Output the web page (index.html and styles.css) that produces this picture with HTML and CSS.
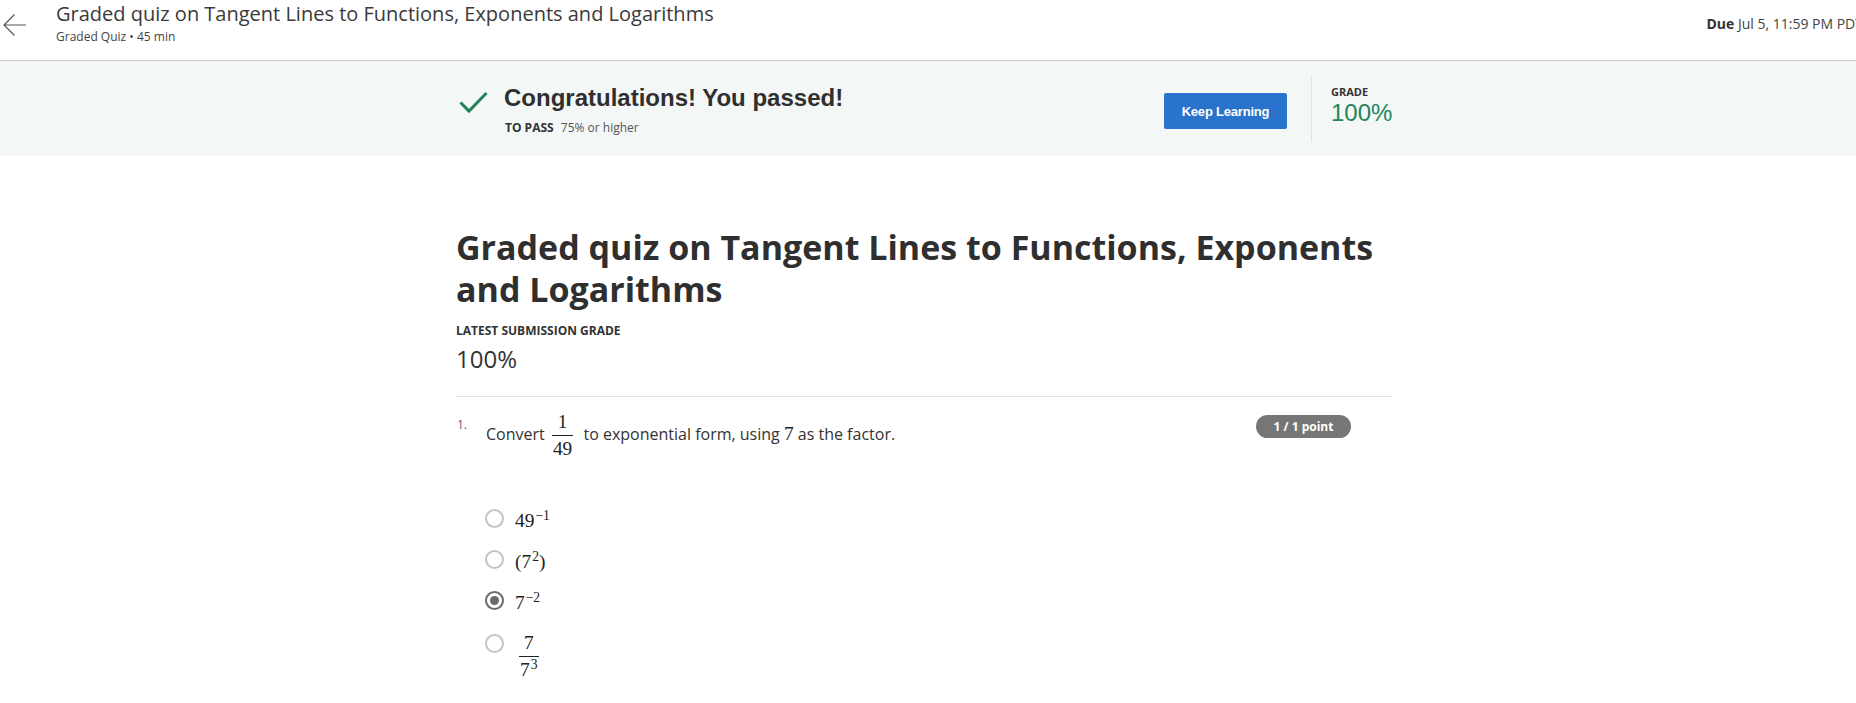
FILE: index.html
```html
<!DOCTYPE html>
<html lang="en">
<head>
<meta charset="utf-8">
<title>Graded quiz</title>
<link rel="stylesheet" href="styles.css">
</head>
<body>
<header class="topbar">
  <div class="back">
    <svg class="back-icon" width="24" height="24" viewBox="0 0 24 24" fill="none" stroke="#555" stroke-width="1.2">
      <path d="M23 12H1.5M11.5 1.5L1 12l10.5 10.5"/>
    </svg>
  </div>
  <div class="topbar-titles">
    <div class="topbar-title">Graded quiz on Tangent Lines to Functions, Exponents and Logarithms</div>
    <div class="topbar-sub">Graded Quiz • 45 min</div>
  </div>
  <div class="due"><b>Due</b> Jul 5, 11:59 PM PDT</div>
</header>

<section class="banner">
  <div class="banner-inner">
    <svg class="check" width="29" height="24" viewBox="0 0 29 24" fill="none" stroke="#1f8354" stroke-width="3">
      <path d="M1.5 12.5l8.5 8.5L27.5 3"/>
    </svg>
    <div class="pass-text">
      <div class="pass-title">Congratulations! You passed!</div>
      <div class="pass-sub"><b>TO PASS</b> 75% or higher</div>
    </div>
    <button class="keep">Keep Learning</button>
    <div class="divider"></div>
    <div class="grade">
      <div class="grade-label">GRADE</div>
      <div class="grade-value">100%</div>
    </div>
  </div>
</section>

<main class="content">
  <h1 class="quiz-title">Graded quiz on Tangent Lines to Functions, Exponents and Logarithms</h1>
  <div class="latest-label">LATEST SUBMISSION GRADE</div>
  <div class="latest-value">100%</div>
  <hr class="rule">

  <div class="question">
    <div class="qnum">1.</div>
    <div class="qbody">
      <div class="qtext">Convert <span class="frac q-frac"><span class="num">1</span><span class="den">49</span></span> to exponential form, using <span class="m">7</span> as the factor.</div>
      <ul class="options">
        <li class="option"><span class="radio"></span><span class="m opt-m">49<sup>−1</sup></span></li>
        <li class="option"><span class="radio"></span><span class="m opt-m">(7<sup>2</sup>)</span></li>
        <li class="option"><span class="radio checked"></span><span class="m opt-m">7<sup>−2</sup></span></li>
        <li class="option tall"><span class="radio"></span><span class="frac opt-frac"><span class="num">7</span><span class="den">7<sup>3</sup></span></span></li>
      </ul>
    </div>
    <div class="points">1 / 1 point</div>
  </div>
</main>
</body>
</html>
```

FILE: styles.css
```css
html, body {
  margin: 0;
  padding: 0;
  background: #fff;
  overflow: hidden;
}
body {
  font-family: "Open Sans", "Liberation Sans", sans-serif;
  color: #333;
  width: 1856px;
  height: 703px;
}

/* top bar */
.topbar {
  display: flex;
  align-items: flex-start;
  height: 60px;
  border-bottom: 1px solid #c5cbcb;
}
.back {
  width: 56px;
  flex: none;
}
.back-icon {
  display: block;
  margin: 13px 0 0 3px;
}
.topbar-titles {
  padding-top: 2px;
}
.topbar-title {
  font-size: 20px;
  line-height: 24px;
  color: #3a3a3a;
}
.topbar-sub {
  margin-top: 3px;
  font-size: 12px;
  line-height: 16px;
  color: #444;
}
.due {
  margin-left: auto;
  margin-right: -7px;
  margin-top: 14px;
  font-size: 14px;
  line-height: 20px;
  color: #444;
  white-space: nowrap;
}
.due b {
  color: #333;
}

/* banner */
.banner {
  background: #f3f8f7;
  height: 95px;
}
.banner-inner {
  width: 944px;
  margin: 0 auto;
  display: flex;
  align-items: flex-start;
  height: 95px;
}
.check {
  flex: none;
  margin: 29px 16px 0 3px;
}
.pass-text {
  margin-top: 22px;
  flex: 1;
}
.pass-title {
  font-family: "Liberation Sans", Arial, sans-serif;
  font-weight: bold;
  font-size: 24px;
  line-height: 30px;
  color: #2f2f2f;
}
.pass-sub {
  margin-top: 7px;
  font-size: 12px;
  line-height: 16px;
  color: #555;
  padding-left: 1px;
}
.pass-sub b {
  color: #333;
  margin-right: 4px;
}
.keep {
  margin-top: 32px;
  width: 123px;
  height: 36px;
  border: none;
  border-radius: 2px;
  background: #2a73cc;
  color: #fff;
  font-family: "Liberation Sans", Arial, sans-serif;
  font-weight: bold;
  font-size: 13px;
  letter-spacing: -0.2px;
  padding: 0;
}
.divider {
  margin: 14px 19px 0 24px;
  width: 1px;
  height: 67px;
  background: #dfe3e3;
}
.grade {
  width: 69px;
  margin-top: 23px;
}
.grade-label {
  font-size: 11px;
  font-weight: bold;
  line-height: 16px;
  color: #333;
}
.grade-value {
  font-family: "Liberation Sans", Arial, sans-serif;
  font-size: 24px;
  line-height: 26px;
  color: #23845a;
}

/* content */
.content {
  width: 944px;
  margin: 0 auto;
}
.quiz-title {
  margin: 70px 0 0;
  font-size: 34px;
  line-height: 42px;
  font-weight: bold;
  color: #2f2f2f;
}
.latest-label {
  margin-top: 13px;
  font-size: 12px;
  font-weight: bold;
  line-height: 16px;
  color: #333;
}
.latest-value {
  margin-top: 6px;
  font-size: 24px;
  line-height: 28px;
  color: #333;
}
.rule {
  margin: 23px 8px 0 0;
  border: none;
  border-top: 1px solid #e1e1e1;
  height: 0;
}

.question {
  display: flex;
  align-items: flex-start;
  margin-top: 15px;
}
.qnum {
  width: 29px;
  flex: none;
  font-size: 12px;
  line-height: 16px;
  color: #666;
  padding-left: 1px;
  margin-top: 5px;
}
.qbody {
  flex: 1;
}
.qtext {
  font-size: 16px;
  line-height: 24px;
  color: #333;
}
.m {
  font-family: "Liberation Serif", "Times New Roman", serif;
  font-size: 19.4px;
  color: #222;
}
.m sup, .frac sup {
  font-size: 13.6px;
  vertical-align: 7px;
  line-height: 0;
  margin-left: 1px;
}
.frac {
  display: inline-flex;
  flex-direction: column;
  align-items: center;
  vertical-align: middle;
  font-family: "Liberation Serif", "Times New Roman", serif;
  font-size: 19.4px;
  color: #222;
}
.frac .num {
  line-height: 20px;
  padding: 0 1px 3px;
  border-bottom: 1px solid #222;
  align-self: stretch;
  text-align: center;
}
.frac .den {
  line-height: 20px;
  padding: 3px 1px 0;
}
.q-frac {
  margin: 0 6px 0 3px;
}

.options {
  list-style: none;
  margin: 39px 0 0;
  padding: 0;
}
.option {
  display: flex;
  align-items: flex-start;
  height: 41px;
}
.option.tall {
  height: 60px;
}
.radio {
  flex: none;
  box-sizing: border-box;
  width: 19px;
  height: 19px;
  border: 2px solid #c4c4c4;
  border-radius: 50%;
  margin: 11px 11px 0 -1px;
  display: flex;
  align-items: center;
  justify-content: center;
}
.option.tall .radio {
  margin-top: 13px;
}
.radio.checked {
  border-color: #6a6a6a;
}
.radio.checked::after {
  content: "";
  width: 9px;
  height: 9px;
  border-radius: 50%;
  background: #6a6a6a;
}
.opt-m {
  line-height: 41px;
  margin-top: 2px;
}
.opt-frac {
  margin: 12px 0 0 4px;
}

.points {
  flex: none;
  margin: 3px 49px 0 auto;
  width: 95px;
  height: 23px;
  border-radius: 12px;
  background: #767676;
  color: #fff;
  font-size: 12px;
  font-weight: bold;
  line-height: 23px;
  text-align: center;
}
```
